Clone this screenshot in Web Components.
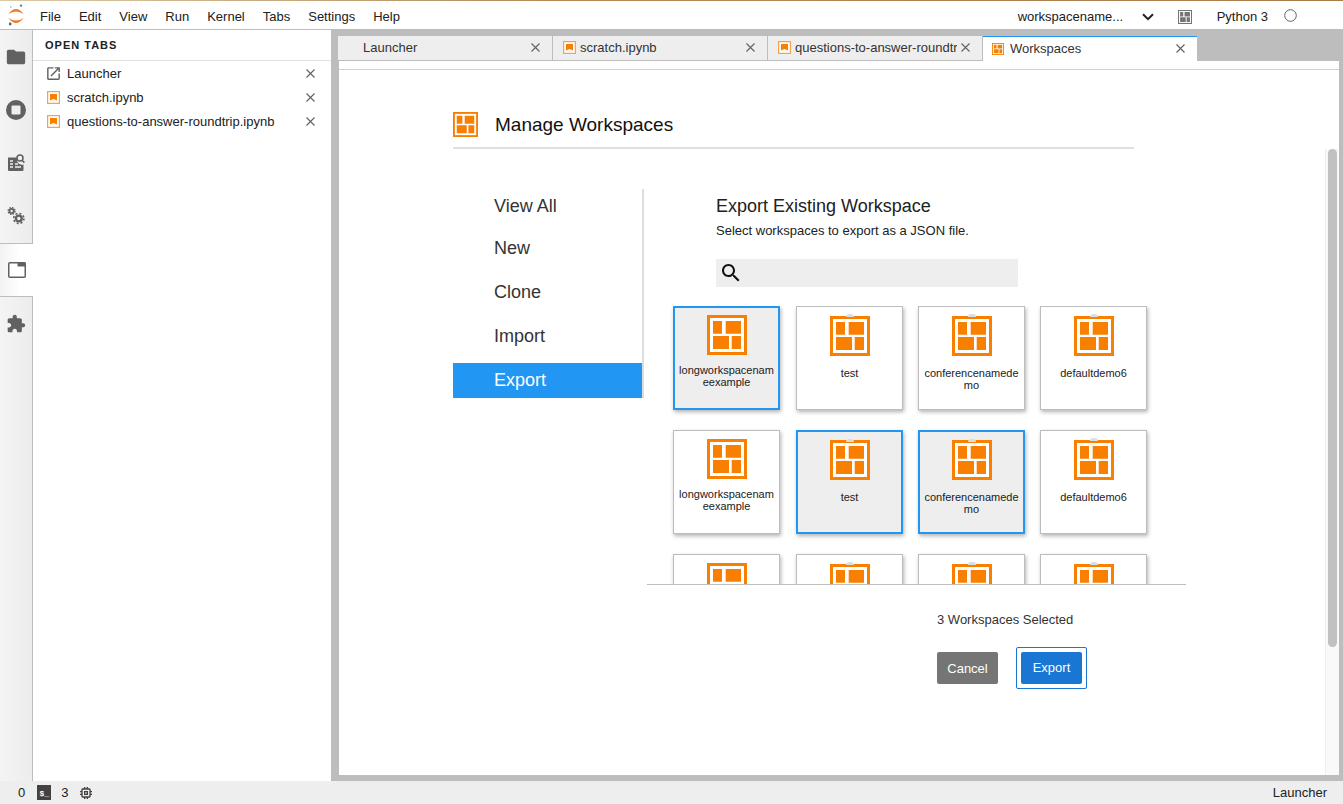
<!DOCTYPE html>
<html>
<head>
<meta charset="utf-8">
<title>Workspaces</title>
<style>
html,body{margin:0;padding:0;height:100%;overflow:hidden;background:#bdbdbd}
body{font-family:"Liberation Sans",Arial,sans-serif;font-size:13px;color:#212121}
</style>
</head>
<body>
<jp-shell>
  <jp-menubar slot="top"></jp-menubar>
  <jp-sidebar slot="left"></jp-sidebar>
  <jp-open-tabs slot="panel">
    <jp-tab-row icon="launch">Launcher</jp-tab-row>
    <jp-tab-row icon="notebook">scratch.ipynb</jp-tab-row>
    <jp-tab-row icon="notebook">questions-to-answer-roundtrip.ipynb</jp-tab-row>
  </jp-open-tabs>
  <jp-dock slot="main">
    <jp-dock-tab slot="tabs" first>Launcher</jp-dock-tab>
    <jp-dock-tab slot="tabs" icon="notebook">scratch.ipynb</jp-dock-tab>
    <jp-dock-tab slot="tabs" icon="notebook">questions-to-answer-roundtrip.ipynb</jp-dock-tab>
    <jp-dock-tab slot="tabs" icon="workspace" active>Workspaces</jp-dock-tab>
    <ws-manager>
      <ws-card selected long>longworkspacenameexample</ws-card>
      <ws-card>test</ws-card>
      <ws-card>conferencenamedemo</ws-card>
      <ws-card>defaultdemo6</ws-card>
      <ws-card long>longworkspacenameexample</ws-card>
      <ws-card selected>test</ws-card>
      <ws-card selected>conferencenamedemo</ws-card>
      <ws-card>defaultdemo6</ws-card>
      <ws-card long></ws-card>
      <ws-card></ws-card>
      <ws-card></ws-card>
      <ws-card></ws-card>
    </ws-manager>
  </jp-dock>
  <jp-statusbar slot="status"></jp-statusbar>
</jp-shell>

<script>
const ORANGE = '#f97f00';
const GREY = '#616161';

function closeIcon() {
  return `<svg width="9" height="9" viewBox="0 0 9 9" style="display:block;flex:none"><path d="M.5 .5l8 8M8.5 .5l-8 8" stroke="${GREY}" stroke-width="1.1" fill="none"/></svg>`;
}

function notebookIcon(size) {
  return `<svg width="${size}" height="${size}" viewBox="0 0 13 13" style="display:block;flex:none"><rect x=".6" y=".6" width="11.8" height="11.8" fill="#fff" stroke="#f9a04a" stroke-width="1.2"/><path d="M3 3h7v6.6L6.5 8 3 9.6z" fill="${ORANGE}"/></svg>`;
}

function workspaceIcon(size, color) {
  const c = color || ORANGE;
  return `<svg width="${size}" height="${size}" viewBox="0 0 40 40" style="display:block;flex:none"><rect x="1.5" y="1.5" width="37" height="37" fill="#fff" stroke="${c}" stroke-width="3"/><path d="M6 6h9v12.7H6zM18.7 6H34v12.7H18.7zM6 21h16v13H6zM24.7 21H34v13h-9.3z" fill="${c}"/></svg>`;
}

class JpShell extends HTMLElement {
  constructor() {
    super();
    this.attachShadow({ mode: 'open' });
  }
  connectedCallback() {
    this.shadowRoot.innerHTML = `
      <style>
:host{display:flex;flex-direction:column;height:804px;background:#bdbdbd}
.row{display:flex;flex:1;min-height:0}
      </style>
      <slot name="top"></slot>
      <div class="row">
        <slot name="left"></slot>
        <slot name="panel"></slot>
        <slot name="main"></slot>
      </div>
      <slot name="status"></slot>
    `;
  }
}

class JpMenubar extends HTMLElement {
  constructor() {
    super();
    this.attachShadow({ mode: 'open' });
  }
  connectedCallback() {
    const items = ['File', 'Edit', 'View', 'Run', 'Kernel', 'Tabs', 'Settings', 'Help'];
    this.shadowRoot.innerHTML = `
      <style>
:host{display:block;height:30px;box-sizing:border-box;background:#fff;border-bottom:1px solid #bdbdbd;position:relative}
.line{height:1px;background:linear-gradient(90deg,#d9cba6,#b48a58 40%,#a97c4c)}
.bar{display:flex;align-items:center;height:28px;padding-top:3px;box-sizing:border-box;font-size:13px;color:#212121}
.logo{width:40px;flex:none;margin-top:-3px}
.menu{display:flex;gap:18px}
.right{margin-left:auto;display:flex;align-items:center}
.ws{width:78px;margin-right:46px;white-space:nowrap}
.chev{margin-right:24px}
.grid{margin-right:25px}
.kernel{margin-right:16px}
      </style>
      <div class="line"></div>
      <div class="bar">
        <div class="logo">
          <svg width="32" height="28" viewBox="0 0 32 28" style="display:block">
            <path d="M8.5 13Q16 3 23.5 13Q16 8 8.5 13z" fill="#f37726"/>
            <path d="M8.5 17Q16 27 23.5 17Q16 22 8.5 17z" fill="#f37726"/>
            <circle cx="21" cy="4.6" r="1.2" fill="#767677"/>
            <circle cx="10.2" cy="23" r="1.4" fill="#616262"/>
            <circle cx="10.8" cy="6" r=".8" fill="#9e9e9e"/>
          </svg>
        </div>
        <div class="menu">${items.map(t => `<span>${t}</span>`).join('')}</div>
        <div class="right">
          <span class="ws">workspacename...</span>
          <svg class="chev" width="12" height="8" viewBox="0 0 12 8"><path d="M1 1.2l5 5 5-5" stroke="#212121" stroke-width="2" fill="none"/></svg>
          <span class="grid">${workspaceIcon(14, '#757575')}</span>
          <span class="kernel">Python 3</span>
          <svg style="margin-right:46px;margin-top:-2px" width="13" height="13" viewBox="0 0 13 13"><circle cx="6.5" cy="6.5" r="5.8" fill="none" stroke="${GREY}" stroke-width="1"/></svg>
        </div>
      </div>
    `;
  }
}

class JpSidebar extends HTMLElement {
  constructor() {
    super();
    this.attachShadow({ mode: 'open' });
  }
  connectedCallback() {
    this.shadowRoot.innerHTML = `
      <style>
:host{display:flex;flex-direction:column;width:33px;flex:none;box-sizing:border-box;background:linear-gradient(90deg,#f4f4f4,#ececec)}
.slot{height:53px;display:flex;align-items:center;justify-content:center;box-sizing:border-box;border-right:1px solid #bdbdbd;flex:none}
.fill{flex:1;border-right:1px solid #bdbdbd}
.active{background:linear-gradient(90deg,#f2f2f2,#fff 60%);border-right:0;border-top:1px solid #bdbdbd;border-bottom:1px solid #bdbdbd;height:54px}
svg{display:block}
      </style>
      <div class="slot">
        <svg width="22" height="22" viewBox="0 0 24 24"><path fill="${GREY}" d="M10 4H4c-1.1 0-1.99.9-1.99 2L2 18c0 1.1.9 2 2 2h16c1.1 0 2-.9 2-2V8c0-1.1-.9-2-2-2h-8l-2-2z"/></svg>
      </div>
      <div class="slot">
        <svg width="20" height="20" viewBox="0 0 20 20"><circle cx="10" cy="10" r="10" fill="${GREY}"/><rect x="5.5" y="5.5" width="9" height="9" rx="1" fill="#eee"/></svg>
      </div>
      <div class="slot">
        <svg width="18" height="19" viewBox="0 0 18 19"><path fill="${GREY}" d="M1 4.5h9.5a5 5 0 0 0 6 7V17a1 1 0 0 1-1 1H2a1 1 0 0 1-1-1z"/><path d="M3 8h3M3 11h3M3 14h3M8 14h6M8 11h3" stroke="#eee" stroke-width="1.4"/><circle cx="13" cy="5" r="3" fill="none" stroke="${GREY}" stroke-width="1.5"/><path d="M15 7.2l2.4 2.4" stroke="${GREY}" stroke-width="1.6"/></svg>
      </div>
      <div class="slot" style="height:54px">
        <svg width="18" height="18" viewBox="0 0 18 18">
          <circle cx="4.6" cy="4" r="2.1" fill="none" stroke="${GREY}" stroke-width="1.8"/>
          <circle cx="4.6" cy="4" r="3.4" fill="none" stroke="${GREY}" stroke-width="1.4" stroke-dasharray="1.5 1.17"/>
          <circle cx="11.8" cy="11.5" r="2.9" fill="none" stroke="${GREY}" stroke-width="2.4"/>
          <circle cx="11.8" cy="11.5" r="5.1" fill="none" stroke="${GREY}" stroke-width="1.6" stroke-dasharray="2 2"/>
        </svg>
      </div>
      <div class="slot active">
        <svg width="18" height="16" viewBox="0 0 18 16"><rect x=".75" y=".75" width="16.5" height="14.5" rx="1" fill="#fff" stroke="${GREY}" stroke-width="1.5"/><rect x="9.5" y=".5" width="8" height="4" fill="${GREY}"/></svg>
      </div>
      <div class="slot">
        <svg width="20" height="20" viewBox="0 0 24 24"><path fill="${GREY}" d="M20.5 11H19V7c0-1.1-.9-2-2-2h-4V3.5C13 2.12 11.88 1 10.5 1S8 2.12 8 3.5V5H4c-1.1 0-1.99.9-1.99 2v3.8H3.5c1.49 0 2.7 1.21 2.7 2.7s-1.21 2.7-2.7 2.7H2V20c0 1.1.9 2 2 2h3.8v-1.5c0-1.49 1.21-2.7 2.7-2.7 1.49 0 2.7 1.21 2.7 2.7V22H17c1.1 0 2-.9 2-2v-4h1.5c1.38 0 2.5-1.12 2.5-2.5S21.88 11 20.5 11z"/></svg>
      </div>
      <div class="fill"></div>
    `;
  }
}

class JpOpenTabs extends HTMLElement {
  constructor() {
    super();
    this.attachShadow({ mode: 'open' });
  }
  connectedCallback() {
    this.shadowRoot.innerHTML = `
      <style>
:host{display:block;width:298px;flex:none;background:#fff;border-left:0}
.head{height:31px;box-sizing:border-box;padding:10px 12px 0;border-bottom:1px solid #e0e0e0;font-size:11px;font-weight:700;letter-spacing:1px;line-height:11px;color:#212121}
      </style>
      <div class="head">OPEN TABS</div>
      <slot></slot>
    `;
  }
}

class JpTabRow extends HTMLElement {
  constructor() {
    super();
    this.attachShadow({ mode: 'open' });
  }
  connectedCallback() {
    const ico = this.getAttribute('icon') === 'launch'
      ? `<svg width="17" height="17" viewBox="0 0 24 24" style="display:block;margin:0 -2px 0 -2px"><path fill="${GREY}" d="M19 19H5V5h7V3H5c-1.11 0-2 .9-2 2v14c0 1.1.89 2 2 2h14c1.1 0 2-.9 2-2v-7h-2v7zM14 3v2h3.59l-9.83 9.83 1.41 1.41L19 6.41V10h2V3h-7z"/></svg>`
      : notebookIcon(13);
    this.shadowRoot.innerHTML = `
      <style>
:host{display:flex;align-items:center;height:24px;padding-left:14px;padding-right:16px;font-size:13px;color:#212121}
.ico{width:13px;display:flex;justify-content:center;margin-right:7px;flex:none}
.text{flex:1;white-space:nowrap}
      </style>
      <span class="ico">${ico}</span>
      <span class="text"><slot></slot></span>
      ${closeIcon()}
    `;
  }
}

class JpDock extends HTMLElement {
  constructor() {
    super();
    this.attachShadow({ mode: 'open' });
  }
  connectedCallback() {
    this.shadowRoot.innerHTML = `
      <style>
:host{display:flex;flex-direction:column;flex:1;min-width:0;padding:6px 4px 6px 8px;box-sizing:border-box}
.tabs{display:flex;height:25px;flex:none;box-sizing:border-box;margin-left:-1px;margin-right:-4px}
.strip{height:8px;flex:none;background:#fff;border-bottom:1px solid #d0d0d0}
.body{flex:1;min-height:0;background:#fff;position:relative;overflow:hidden}
.track{position:absolute;right:0;top:79px;bottom:0;width:14px;box-sizing:border-box;background:#f9f9f9;border-left:1px solid #efefef}
.thumb{position:absolute;left:2px;top:0;width:9px;height:498px;border-radius:5px;background:#c1c1c1}
      </style>
      <div class="tabs"><slot name="tabs"></slot></div>
      <div class="strip"></div>
      <div class="body">
        <slot></slot>
        <div class="track"><div class="thumb"></div></div>
      </div>
    `;
  }
}

class JpDockTab extends HTMLElement {
  constructor() {
    super();
    this.attachShadow({ mode: 'open' });
  }
  connectedCallback() {
    const kind = this.getAttribute('icon');
    const ico = kind === 'notebook' ? notebookIcon(13) : kind === 'workspace' ? workspaceIcon(12) : '';
    this.shadowRoot.innerHTML = `
      <style>
:host{display:flex;align-items:center;width:215px;height:25px;flex:none;box-sizing:border-box;background:#eee;border-right:1px solid #bdbdbd;border-bottom:1px solid #bdbdbd;padding:0 12px 1px 10px;font-size:13px;color:#333;gap:4px}
:host([first]){padding-left:25px;width:215px}
:host([active]){background:#fff;border-top:1px solid #2196f3;border-bottom:0;border-right:0;padding-left:9px;gap:6px;width:214px}
.text{flex:1;min-width:0;overflow:hidden;white-space:nowrap}
      </style>
      ${ico}
      <span class="text"><slot></slot></span>
      ${closeIcon()}
    `;
  }
}

class WsManager extends HTMLElement {
  constructor() {
    super();
    this.attachShadow({ mode: 'open' });
  }
  connectedCallback() {
    this.shadowRoot.innerHTML = `
      <style>
:host{display:block;padding:42px 0 0 114px;color:#212121}
.head{width:681px;height:37px;box-sizing:border-box;display:flex;gap:17px;border-bottom:2px solid #e0e0e0;font-size:19px;line-height:25px;color:#111}
.main{display:flex;margin-top:40px}
nav{width:191px;height:209px;box-sizing:border-box;border-right:2px solid #ddd;flex:none;font-size:18px;color:#333}
nav div{height:35px;line-height:35px;margin-top:9px;padding-left:41px}
nav div:first-child{height:33px;line-height:34px;margin-top:0}
nav .on{background:#2196f3;color:#fff}
.pane{width:539px;margin-left:3px;flex:none}
h2{margin:7px 0 0 69px;font-size:18px;font-weight:400;line-height:20px;color:#212121}
p{margin:7px 0 0 69px;font-size:13px;line-height:16px;color:#212121}
.search{margin:20px 0 0 69px;width:302px;height:28px;background:#eee;display:flex;align-items:center;padding-left:3px;box-sizing:border-box}
.view{margin-top:19px;height:279px;box-sizing:border-box;border-bottom:1px solid #bdbdbd;overflow:hidden}
.grid{display:grid;grid-template-columns:108px 107px 107px 107px;column-gap:15px;row-gap:20px;padding-left:26px}
.count{margin:27px 0 0 290px;font-size:13px;line-height:16px;color:#333}
.actions{display:flex;align-items:center;margin:19px 0 0 290px;gap:18px}
button{font:13px "Liberation Sans",Arial,sans-serif;color:#fff;border:0;border-radius:2px;width:61px;height:32px;padding:0}
.cancel{background:#757575;padding-top:1px}
.ring{border:1px solid #1976d2;border-radius:2px;padding:4px}
.export{background:#1976d2;display:block;padding-bottom:1px}
      </style>
      <div class="head">${workspaceIcon(25)}<span>Manage Workspaces</span></div>
      <div class="main">
        <nav>
          <div>View All</div>
          <div>New</div>
          <div>Clone</div>
          <div>Import</div>
          <div class="on">Export</div>
        </nav>
        <div class="pane">
          <h2>Export Existing Workspace</h2>
          <p>Select workspaces to export as a JSON file.</p>
          <div class="search">
            <svg width="24" height="24" viewBox="0 0 24 24"><path fill="#111" d="M15.5 14h-.79l-.28-.27C15.41 12.59 16 11.11 16 9.5 16 5.91 13.09 3 9.5 3S3 5.91 3 9.5 5.91 16 9.5 16c1.61 0 3.09-.59 4.23-1.57l.27.28v.79l5 4.99L20.49 19l-4.99-5zm-6 0C7.01 14 5 11.99 5 9.5S7.01 5 9.5 5 14 7.01 14 9.5 11.99 14 9.5 14z"/></svg>
          </div>
          <div class="view"><div class="grid"><slot></slot></div></div>
          <div class="count">3 Workspaces Selected</div>
          <div class="actions">
            <button class="cancel">Cancel</button>
            <div class="ring"><button class="export">Export</button></div>
          </div>
        </div>
      </div>
    `;
  }
}

class WsCard extends HTMLElement {
  constructor() {
    super();
    this.attachShadow({ mode: 'open' });
  }
  connectedCallback() {
    this.shadowRoot.innerHTML = `
      <style>
:host{display:flex;flex-direction:column;align-items:center;width:107px;height:104px;box-sizing:border-box;background:#fff;border:1px solid #bdbdbd;box-shadow:1px 2px 4px rgba(0,0,0,.3);padding:9px 0 0;position:relative}
:host([selected]){background:#eee;border:2px solid #2196f3;padding-top:8px}
:host([long]){padding-top:8px}
:host([long][selected]){padding-top:7px}
.label{margin-top:11px;width:96px;font-size:11px;line-height:12px;text-align:center;word-break:break-all;color:#212121}
:host([long]) .label{margin-top:9px}
.bump{position:absolute;top:7px;left:50%;margin-left:-4px;width:8px;height:3px;border-radius:4px 4px 0 0;background:#ddd}
:host([long]) .bump{display:none}
      </style>
      <div class="bump"></div>
      ${workspaceIcon(40)}
      <div class="label"><slot></slot></div>
    `;
  }
}

class JpStatusbar extends HTMLElement {
  constructor() {
    super();
    this.attachShadow({ mode: 'open' });
  }
  connectedCallback() {
    this.shadowRoot.innerHTML = `
      <style>
:host{display:flex;align-items:center;height:23px;flex:none;background:#eee;font-size:13px;color:#212121;padding:0 16px 0 18px}
.term{width:14px;height:15px;margin:0 10px 0 12px;background:#424242;color:#fff;font:700 8px/17px "Liberation Mono",monospace;text-align:center;flex:none}
.chip{margin-left:10px;display:block}
.right{margin-left:auto}
      </style>
      <span>0</span>
      <span class="term">$_</span>
      <span>3</span>
      <svg class="chip" width="16" height="16" viewBox="0 0 24 24"><path fill="#424242" d="M15 9H9v6h6V9zm-2 4h-2v-2h2v2zm8-2V9h-2V7c0-1.1-.9-2-2-2h-2V3h-2v2h-2V3H9v2H7c-1.1 0-2 .9-2 2v2H3v2h2v2H3v2h2v2c0 1.1.9 2 2 2h2v2h2v-2h2v2h2v-2h2c1.1 0 2-.9 2-2v-2h2v-2h-2v-2h2zm-4 6H7V7h10v10z"/></svg>
      <span class="right">Launcher</span>
    `;
  }
}

customElements.define('jp-shell', JpShell);
customElements.define('jp-menubar', JpMenubar);
customElements.define('jp-sidebar', JpSidebar);
customElements.define('jp-open-tabs', JpOpenTabs);
customElements.define('jp-tab-row', JpTabRow);
customElements.define('jp-dock', JpDock);
customElements.define('jp-dock-tab', JpDockTab);
customElements.define('ws-manager', WsManager);
customElements.define('ws-card', WsCard);
customElements.define('jp-statusbar', JpStatusbar);
</script>
</body>
</html>
